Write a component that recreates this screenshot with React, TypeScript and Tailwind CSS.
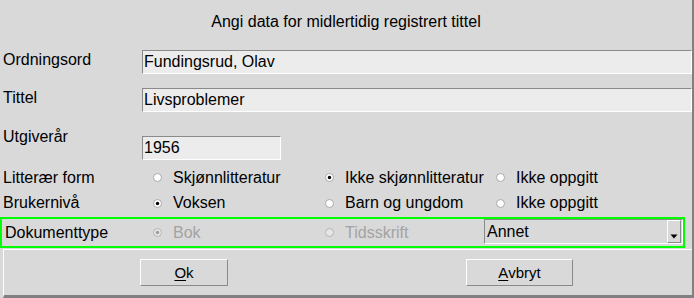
import React from 'react';

const Radio: React.FC<{ checked?: boolean; disabled?: boolean }> = ({ checked, disabled }) => (
  <svg width="9" height="9" viewBox="0 0 9 9" className="shrink-0">
    <circle cx="4.5" cy="4.5" r="4" fill={disabled ? '#e6e6e6' : '#ffffff'} stroke={disabled ? '#b4b4b4' : '#a8a8a8'} strokeWidth="1" />
    {checked && <circle cx="4.5" cy="4.5" r="1.7" fill={disabled ? '#9c9c9c' : '#000000'} />}
  </svg>
);

const Option: React.FC<{ label: string; checked?: boolean; disabled?: boolean; width: string }> = ({
  label,
  checked,
  disabled,
  width
}) => (
  <div className={`${width} flex items-center pl-[11px] gap-[11px] whitespace-nowrap overflow-hidden`}>
    <Radio checked={checked} disabled={disabled} />
    <span className={disabled ? 'text-[#a3a3a3]' : 'text-black'}>{label}</span>
  </div>
);

const Field: React.FC<{ value: string; className?: string }> = ({ value, className }) => (
  <div
    className={`h-[24px] bg-[#ececec] border border-t-[#8a8a8a] border-l-[#8a8a8a] border-b-white border-r-white flex items-center pl-[1px] leading-[18px] ${className ?? ''}`}
  >
    {value}
  </div>
);

const Button: React.FC<{ first: string; rest: string; className: string }> = ({ first, rest, className }) => (
  <div
    className={`${className} h-[27px] bg-[#d9d9d9] border border-t-white border-l-white border-b-[#8a8a8a] border-r-[#8a8a8a] flex items-center justify-center text-[15px] leading-[18px]`}
  >
    <span className="underline underline-offset-2">{first}</span>
    {rest}
  </div>
);

export default function App() {
  return (
    <div className="w-[694px] h-[298px] bg-[#d9d9d9] border-r-2 border-[#808080] flex flex-col text-[16px] leading-[18px] text-black font-['Liberation_Sans',Arial,sans-serif] overflow-hidden">
      <div className="h-[50px] pt-[13px] text-center">Angi data for midlertidig registrert tittel</div>

      <div className="flex h-[24px]">
        <div className="w-[142px] pl-[3px] pt-[1px]">Ordningsord</div>
        <Field value="Fundingsrud, Olav" className="flex-1" />
      </div>

      <div className="flex h-[24px] mt-[14px]">
        <div className="w-[142px] pl-[3px] pt-[1px]">Tittel</div>
        <Field value="Livsproblemer" className="flex-1" />
      </div>

      <div className="flex items-start h-[34px] mt-[14px]">
        <div className="w-[142px] pl-[3px] pt-[2px]">Utgiverår</div>
        <Field value="1956" className="w-[139px] mt-[10px]" />
      </div>

      <div className="flex items-center h-[26px] mt-[4px] pt-[1px]">
        <div className="w-[142px] pl-[3px]">Litterær form</div>
        <Option width="w-[172px]" label="Skjønnlitteratur" />
        <Option width="w-[171px]" label="Ikke skjønnlitteratur" checked />
        <Option width="flex-1" label="Ikke oppgitt" />
      </div>

      <div className="flex items-center h-[26px]">
        <div className="w-[142px] pl-[3px]">Brukernivå</div>
        <Option width="w-[172px]" label="Voksen" checked />
        <Option width="w-[171px]" label="Barn og ungdom" />
        <Option width="flex-1" label="Ikke oppgitt" />
      </div>

      <div className="flex items-center h-[31px] mt-[1px] mr-[7px] border-2 border-[#00ff00]">
        <div className="w-[140px] pl-[3px]">Dokumenttype</div>
        <Option width="w-[172px]" label="Bok" checked disabled />
        <Option width="w-[170px]" label="Tidsskrift" disabled />
        <div className="flex-1 self-start h-[25px] border border-t-[#8a8a8a] border-l-[#8a8a8a] border-b-white border-r-white flex items-center">
          <span className="flex-1 pl-[2px]">Annet</span>
          <div className="w-[14px] h-[23px] mr-[1px] border border-t-white border-l-white border-b-[#8a8a8a] border-r-[#8a8a8a] flex items-end justify-center pb-[3px]">
            <svg width="8" height="5" viewBox="0 0 8 5">
              <polygon points="0.5,0.5 7.5,0.5 4,4.5" fill="#000000" />
            </svg>
          </div>
        </div>
      </div>

      <div className="flex-1 mt-[1px] ml-[3px] border-t border-l border-white border-b-[3px] border-b-[#808080] flex items-start pt-[9px]">
        <Button className="w-[88px] ml-[136px]" first="O" rest="k" />
        <Button className="w-[107px] ml-[238px]" first="A" rest="vbryt" />
      </div>
    </div>
  );
}
